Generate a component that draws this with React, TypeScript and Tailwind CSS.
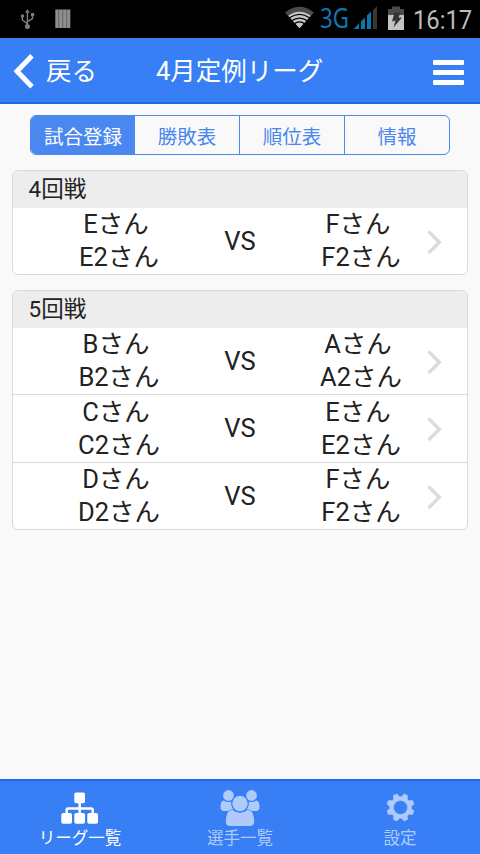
import React from "react";

type Match = { left: string[]; right: string[]; height: string; pad?: string };
type Round = { title: string; matches: Match[] };

const rounds: Round[] = [
  { title: "4回戦", matches: [{ left: ["Eさん", "E2さん"], right: ["Fさん", "F2さん"], height: "h-[66px]" }] },
  {
    title: "5回戦",
    matches: [
      { left: ["Bさん", "B2さん"], right: ["Aさん", "A2さん"], height: "h-[66px]" },
      { left: ["Cさん", "C2さん"], right: ["Eさん", "E2さん"], height: "h-[67px]", pad: "pt-px" },
      { left: ["Dさん", "D2さん"], right: ["Fさん", "F2さん"], height: "h-[66px]" },
    ],
  },
];

function StatusBar() {
  return (
    <div className="flex h-[38px] shrink-0 items-center justify-between bg-black">
      <svg width="80" height="38" viewBox="0 0 80 38" fill="none">
        <g stroke="#7d7d7d" strokeWidth="1.4">
          <path d="M27.4 26V11M22.3 17v3l5 3.6M32.5 15.500v3.200l-5 3" />
        </g>
        <g fill="#7d7d7d">
          <path d="M27.400 9l2.300 3.800h-4.600z" />
          <circle cx="27.400" cy="26.400" r="2.500" />
          <circle cx="22.500" cy="16" r="1.700" />
          <rect x="31" y="13" width="3.200" height="3.200" />
        </g>
        <rect x="55.300" y="9.500" width="15" height="18.500" fill="#8f8f8f" />
        <path d="M58.700 9.500V28M62.700 9.500V28M66.700 9.500V28" stroke="#5e5e5e" strokeWidth=".9" />
      </svg>
      <div className="flex h-full items-center">
        <svg width="38" height="38" viewBox="282 0 38 38">
          <path d="M285 12.500Q299.500 1 314 12.500L299.500 28.300Z" fill="#4a4a4a" />
          <path d="M288.200 15.800Q299.500 7.500 310.800 15.800L299.500 28.300Z" fill="#c6c6c6" />
          <path d="M289.500 17.800Q299.500 11 309.500 17.800M291.500 20.800Q299.500 15.500 307.500 20.800M294 24Q299.500 19.800 305 24" fill="none" stroke="#000" strokeWidth="1.300" />
        </svg>
        <span className="-mt-[2px] w-[32px] origin-left scale-x-[.84] font-['Noto_Sans'] text-[26.500px] leading-none text-[#0b78ad]">3G</span>
        <svg width="60" height="38" viewBox="352 0 60 38">
          <path d="M353.500 29l5.500-5.500V29zM361 21.500l4-4V29h-4zM367 15.500l4-4V29h-4z" fill="#0b78ad" />
          <path d="M373 10l4-4v23h-4z" fill="#363636" />
          <path d="M388 9h4V6.500h8V9h4v7h-16z" fill="#4b4b4b" />
          <path d="M388 15h16v15h-16z" fill="#c3c3c3" />
          <path d="M394.500 12.500h6l-2 5h3.500l-8.500 10 2-7-3.500 1z" fill="#333" />
        </svg>
        <span className="w-[68px] origin-left scale-x-95 whitespace-nowrap pl-px pt-[2px] font-[Roboto] text-[25px] leading-none text-[#bcbcbc]">16:17</span>
      </div>
    </div>
  );
}

function Header() {
  return (
    <header className="grid h-[66px] shrink-0 grid-cols-[156px_1fr_47px] items-center border-b-2 border-[#176bec] bg-[#387ff5] text-[25.500px] leading-[38px] text-white">
      <div className="flex items-center pt-px">
        <svg width="46" height="38" viewBox="0 0 46 38" fill="none">
          <path d="M32 3.800L17 19.300L32 34.800" stroke="#fff" strokeWidth="5" />
        </svg>
        <span className="pt-px">戻る</span>
      </div>
      <h1 className="whitespace-nowrap pt-[2px]">4月定例リーグ</h1>
      <div className="mt-1 flex w-[31px] flex-col gap-[5px]">
        <i className="h-[5px] rounded-[1px] bg-white" />
        <i className="h-[5px] rounded-[1px] bg-white" />
        <i className="h-[5px] rounded-[1px] bg-white" />
      </div>
    </header>
  );
}

function Tabs() {
  return (
    <nav className="mx-[30px] mt-[11px] grid h-10 shrink-0 grid-cols-[104px_105px_105px_104px] overflow-hidden rounded-md border border-[#4a87ee] text-[19.500px] text-[#4a87ee]">
      {["試合登録", "勝敗表", "順位表", "情報"].map((label, i) => (
        <button
          key={label}
          className={i === 0 ? "bg-[#4a87ee] pt-[5px] text-white" : i === 3 ? "pt-[5px]" : "border-r border-[#4a87ee] pt-[5px]"}
        >
          {label}
        </button>
      ))}
    </nav>
  );
}

function Pair({ names, pad = "" }: { names: string[]; pad?: string }) {
  return (
    <div className={`text-center leading-[33px] ${pad}`}>
      <div className="pr-[6px]">{names[0]}</div>
      <div>{names[1]}</div>
    </div>
  );
}

function RoundCard({ round }: { round: Round }) {
  return (
    <section className="mx-3 shrink-0 overflow-hidden rounded-md border border-[#dadada] bg-white text-[#222]">
      <h2 className="h-[37px] bg-[#ededed] pl-[15.500px] text-[22.500px] leading-[37px]">{round.title}</h2>
      {round.matches.map((m, i) => (
        <div
          key={i}
          className={`box-content grid grid-cols-[212px_30px_212px] items-start text-[25.500px] ${m.height} ${i ? "border-t border-[#d9d9d9]" : ""}`}
        >
          <Pair names={m.left} pad={m.pad} />
          <div className="flex justify-center leading-[66px]">VS</div>
          <div className="flex">
            <div className="w-[186px] shrink-0 pl-[26px]">
              <Pair names={m.right} pad={m.pad} />
            </div>
            <svg className="-ml-[14px] mt-[20px] shrink-0" width="18" height="28" viewBox="0 0 18 28" fill="none">
              <path d="M2.500 4.500L12.300 14.300L2.500 24.100" stroke="#dcdcdc" strokeWidth="3.500" strokeLinecap="round" />
            </svg>
          </div>
        </div>
      ))}
    </section>
  );
}

const gearPath = (() => {
  const pts: string[] = [];
  for (let i = 0; i < 8; i++) {
    const a = 22.5 + i * 45;
    for (const [d, r] of [[-16, 10.9], [-8, 14], [8, 14], [16, 10.9]]) {
      const t = ((a + d) * Math.PI) / 180;
      pts.push(`${(20.5 + r * Math.cos(t)).toFixed(2)} ${(19.5 + r * Math.sin(t)).toFixed(2)}`);
    }
  }
  return `M${pts.join("L")}ZM27.500 19.500a7 7 0 1 0-14 0a7 7 0 1 0 14 0Z`;
})();

function Footer() {
  return (
    <footer className="mt-auto grid h-[75px] shrink-0 grid-cols-3 border-t-2 border-[#176bec] bg-[#387ff5] text-[16.500px] leading-[22px] text-white">
      <div className="flex flex-col items-center pt-[7px]">
        <svg width="40" height="40" viewBox="0 0 40 40" fill="#fff">
          <rect x="14.300" y="4.500" width="10.700" height="10.700" rx="1.800" />
          <rect x="1.300" y="25" width="10.700" height="10.700" rx="1.800" />
          <rect x="14.300" y="25" width="10.700" height="10.700" rx="1.800" />
          <rect x="27.300" y="25" width="10.700" height="10.700" rx="1.800" />
          <path d="M19.700 14v12M6.700 26v-4q0-1.500 1.500-1.500h23q1.500 0 1.500 1.500v4" fill="none" stroke="#fff" strokeWidth="2.500" />
        </svg>
        <span>リーグ一覧</span>
      </div>
      <div className="flex flex-col items-center pt-[7px] text-[#afcbfb]">
        <svg width="40" height="40" viewBox="0 0 40 40" fill="currentColor">
          <circle cx="8.500" cy="7.500" r="5.400" />
          <circle cx="31.500" cy="7.500" r="5.400" />
          <path d="M3.500 12.500Q8 15 12 13.500Q11.500 18.500 14.500 21Q10.500 21 8 23H4Q.5 23 .5 19Q.5 13 3.500 12.500ZM36.500 12.500Q32 15 28 13.500Q28.500 18.500 25.500 21Q29.500 21 32 23H36Q39.500 23 39.500 19Q39.500 13 36.500 12.500Z" />
          <circle cx="20" cy="15.500" r="8.300" stroke="#387ff5" strokeWidth="1.200" />
          <path d="M12.500 22Q20 27.500 27.500 22Q31.500 22 33 26Q34.200 29 34.200 33.500Q34.200 38 29.500 38H10.500Q5.800 38 5.800 33.500Q5.800 29 7 26Q8.500 22 12.500 22Z" />
        </svg>
        <span>選手一覧</span>
      </div>
      <div className="flex flex-col items-center pt-[7px] text-[#afcbfb]">
        <svg width="40" height="40" viewBox="0 0 40 40" fill="currentColor" fillRule="evenodd">
          <path d={gearPath} stroke="currentColor" strokeWidth=".5" strokeLinejoin="round" />
        </svg>
        <span>設定</span>
      </div>
    </footer>
  );
}

export default function App() {
  return (
    <div lang="ja" className="flex h-[854px] w-[480px] flex-col overflow-hidden bg-[#f9f9f9] font-['Roboto','Noto_Sans_CJK_JP',sans-serif]">
      <StatusBar />
      <Header />
      <Tabs />
      <main className="flex flex-col gap-[15px] pt-[15px]">
        {rounds.map((r) => (
          <RoundCard key={r.title} round={r} />
        ))}
      </main>
      <Footer />
    </div>
  );
}
